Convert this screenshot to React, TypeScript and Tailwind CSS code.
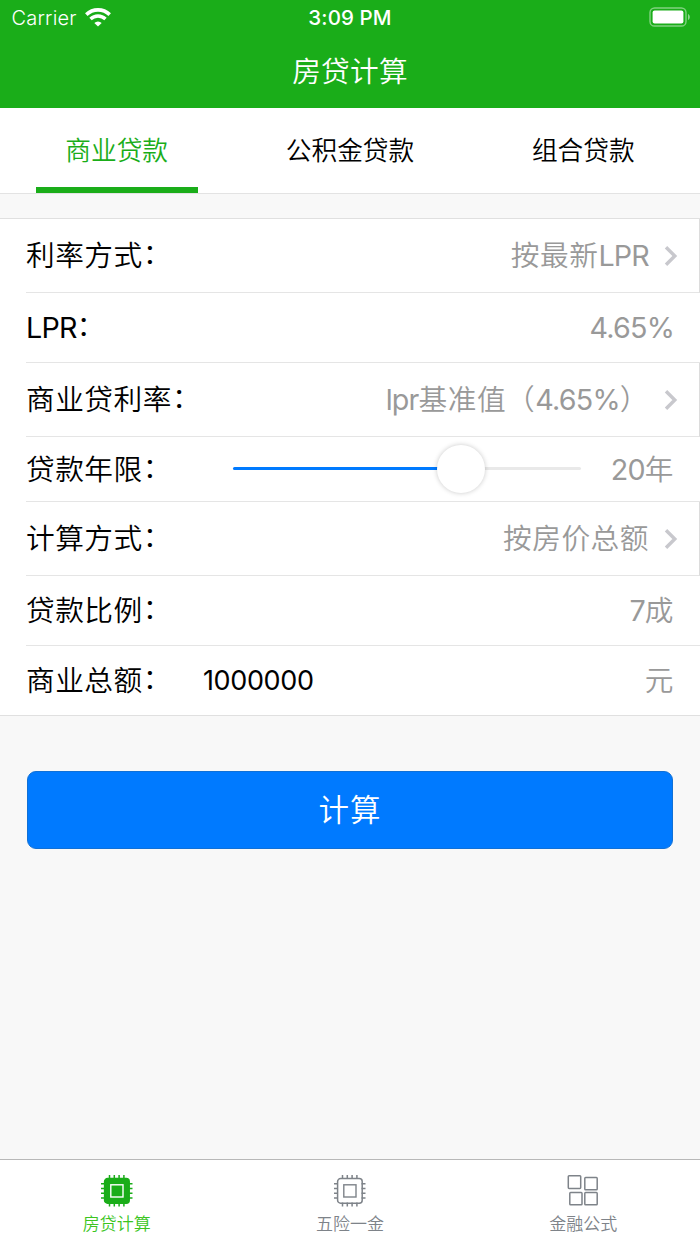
import { ReactNode } from 'react'

const tabs = ['商业贷款', '公积金贷款', '组合贷款']

function Chevron() {
  return (
    <svg width="14" height="22" viewBox="0 0 14 22" fill="none" className="ml-[15px] shrink-0">
      <path d="M2 2.2 L10.8 11 L2 19.8" stroke="#c8c8cd" strokeWidth="3.4" />
    </svg>
  )
}

// Latin runs are set tighter than the Chinese around them
function MixedText({ text }: { text: string }) {
  return (
    <>
      {text.split(/([A-Za-z0-9.%]+)/).map((part, i) =>
        i % 2 === 1 ? (
          <span key={i} className="font-normal tracking-[-0.8px]">
            {part}
          </span>
        ) : (
          part
        )
      )}
    </>
  )
}

interface RowProps {
  label: string
  height?: string
  value: string
  link?: boolean
  last?: boolean
  children?: ReactNode
}

function Row({ label, height = 'h-[70px]', value, link, last, children }: RowProps) {
  return (
    <div
      className={`flex items-center ${height} ${last ? 'pl-[26px]' : 'ml-[26px] border-b border-[#e5e5e5]'} ${
        link ? 'border-r border-r-[#dcdcdc] pr-[21px]' : 'pr-[26px]'
      }`}
    >
      <span className="pt-0.5 whitespace-nowrap text-black">
        <MixedText text={label} />
        <span className="inline-block align-[2px] leading-[22px]">：</span>
      </span>
      {children}
      <span className="ml-auto pt-0.5 whitespace-nowrap text-[#999999]">
        <MixedText text={value} />
      </span>
      {link && <Chevron />}
    </div>
  )
}

function YearSlider() {
  return (
    <div className="relative ml-[61px] h-12 w-[348px]">
      <div className="absolute top-[22px] left-0 h-[3px] w-full rounded-full bg-[#e9e9e9]" />
      <div className="absolute top-[22px] left-0 h-[3px] w-[210px] rounded-full bg-[#007aff]" />
      <div className="absolute top-0 left-[204px] size-12 rounded-full bg-white shadow-[0_0_5px_rgba(0,0,0,0.22)]" />
    </div>
  )
}

function ChipIcon({ active }: { active?: boolean }) {
  const color = active ? '#1aad19' : '#7e8389'
  return (
    <svg width="34" height="34" viewBox="0 0 34 34" fill="none">
      <path
        d="M9.5 1v4M14.3 1v4M19.1 1v4M23.9 1v4M9.5 28.5v4M14.3 28.5v4M19.1 28.5v4M23.9 28.5v4M1 9.8h4M1 14.5h4M1 19.2h4M1 23.9h4M28.5 9.8h4M28.5 14.5h4M28.5 19.2h4M28.5 23.9h4"
        stroke={color}
        strokeWidth="1.5"
      />
      <rect x="4.6" y="4.6" width="24.6" height="24.6" rx="3" stroke={color} strokeWidth="1.5" fill={active ? color : 'none'} />
      <rect x="10.8" y="10.8" width="12.2" height="12.2" stroke={active ? '#ffffff' : color} strokeWidth="1.4" />
    </svg>
  )
}

function GridIcon() {
  return (
    <svg width="34" height="34" viewBox="0 0 34 34" fill="none" stroke="#7e8389" strokeWidth="1.5">
      <rect x="2.3" y="1.8" width="12.4" height="12.6" rx="0.8" />
      <rect x="18.8" y="3.6" width="12.4" height="12.2" rx="0.8" />
      <rect x="3.8" y="18.6" width="12.2" height="12.2" rx="0.8" />
      <rect x="18.8" y="18.6" width="12.4" height="12.2" rx="0.8" />
    </svg>
  )
}

function StatusBar() {
  return (
    <div className="grid h-9 grid-cols-3 items-center text-[20.5px] leading-none">
      <div className="flex items-center gap-2 pl-[11.5px]">
        <span className="text-[20px] tracking-[0.2px]">Carrier</span>
        <svg width="26" height="19" viewBox="0 0 26 19" fill="none" stroke="#fff" className="mb-0.5">
          <path d="M1.3 6.6 A16.8 16.8 0 0 1 24.7 6.6" strokeWidth="3.6" />
          <path d="M5.5 11 A10.8 10.8 0 0 1 20.5 11" strokeWidth="3.4" />
          <path d="M13 18.6 L9.3 14.9 A5.3 5.3 0 0 1 16.7 14.9 Z" fill="#fff" stroke="none" />
        </svg>
      </div>
      <div className="text-center font-medium tracking-[0.1px]">3:09 PM</div>
      <div className="flex justify-end pr-[8.5px] pb-0.5">
        <svg width="42" height="20" viewBox="0 0 42 20" fill="none">
          <rect x="1" y="1" width="36" height="18" rx="4.6" stroke="#fff" strokeOpacity="0.45" strokeWidth="1.4" />
          <rect x="3.6" y="3.6" width="30.8" height="12.8" rx="2" fill="#fff" />
          <path d="M39 7 C41.4 7.8 41.4 12.2 39 13 Z" fill="#fff" fillOpacity="0.5" />
        </svg>
      </div>
    </div>
  )
}

export default function App() {
  return (
    <div className="flex h-[1244px] w-[700px] flex-col overflow-hidden bg-[#f8f8f8] font-[Inter,'Noto_Sans_CJK_SC',sans-serif] font-[350]">
      <header className="h-[108px] bg-[#1aad19] text-white">
        <StatusBar />
        <h1 className="pt-[15px] text-center text-[28.7px] leading-[42px] tracking-[0.2px]">房贷计算</h1>
      </header>

      <nav className="grid h-[86px] grid-cols-3 border-b border-[#e3e3e3] bg-white text-[25.7px] leading-none">
        {tabs.map((tab, i) => (
          <div key={tab} className="flex flex-col items-center">
            <div className={`flex h-[79px] items-center pt-[7px] ${i === 0 ? 'text-[#1aad19]' : 'text-black'}`}>{tab}</div>
            {i === 0 && <div className="h-[6px] w-[162px] bg-[#1aad19]" />}
          </div>
        ))}
      </nav>

      <section className="mt-6 border-y border-[#e0e0e0] bg-white text-[28.7px] leading-none tracking-[0.5px]">
        <Row label="利率方式" height="h-[74px]" value="按最新LPR" link />
        <Row label="LPR" value="4.65%" />
        <Row label="商业贷利率" height="h-[74px]" value="lpr基准值（4.65%）" link />
        <Row label="贷款年限" height="h-[65px]" value="20年">
          <YearSlider />
        </Row>
        <Row label="计算方式" height="h-[74px]" value="按房价总额" link />
        <Row label="贷款比例" value="7成" />
        <Row label="商业总额" height="h-[69px]" value="元" last>
          <span className="ml-[31px] text-[27px] font-normal tracking-[-0.35px] text-black">1000000</span>
        </Row>
      </section>

      <button className="mx-[27px] mt-[55px] h-[78px] rounded-[9px] border border-[#1070d6] bg-[#007aff] text-[30.5px] leading-none tracking-[1px] text-white">
        计算
      </button>

      <footer className="mt-auto grid h-[85px] grid-cols-3 border-t border-[#b8b8b8] bg-white text-[17px] leading-none">
        <div className="flex flex-col items-center gap-2 pt-[14px] text-[#3cc51f]">
          <ChipIcon active />
          房贷计算
        </div>
        <div className="flex flex-col items-center gap-2 pt-[14px] text-[#7e8389]">
          <ChipIcon />
          五险一金
        </div>
        <div className="flex flex-col items-center gap-2 pt-[14px] text-[#7e8389]">
          <GridIcon />
          金融公式
        </div>
      </footer>
    </div>
  )
}
